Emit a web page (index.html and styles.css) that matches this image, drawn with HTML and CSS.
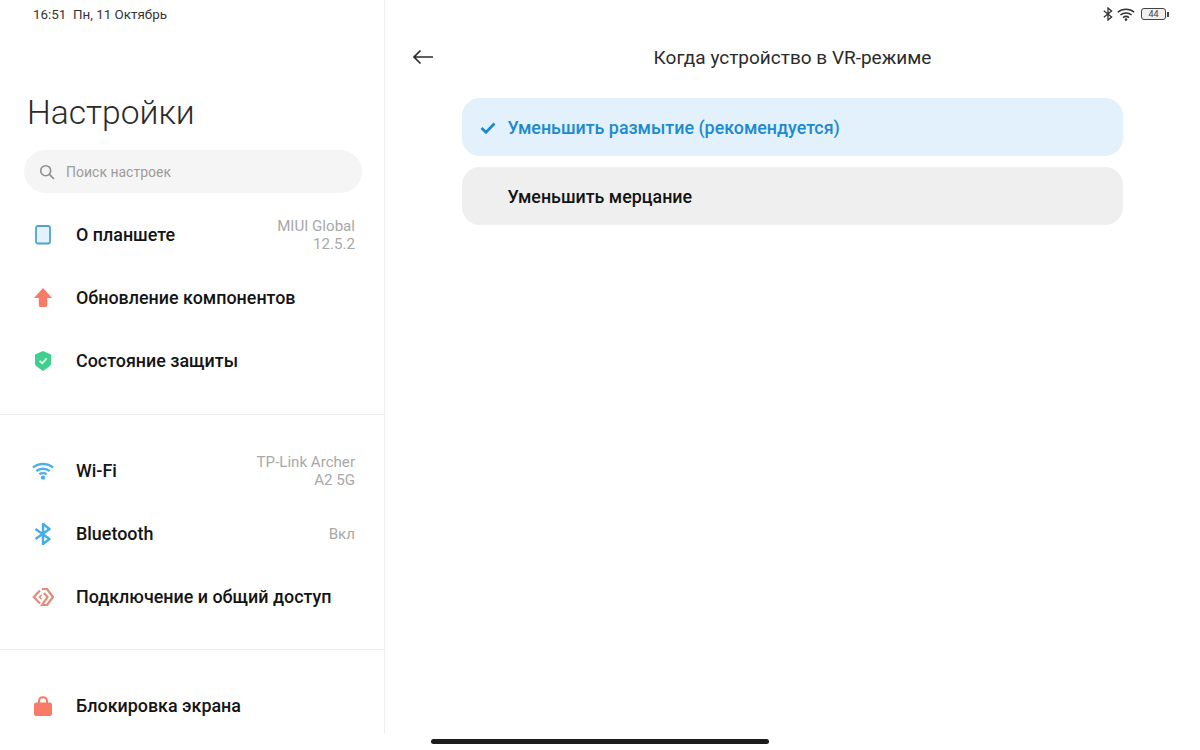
FILE: index.html
```html
<!DOCTYPE html>
<html lang="ru">
<head>
    <meta charset="UTF-8">
    <title>Настройки</title>
    <link rel="stylesheet" href="styles.css">
</head>
<body>
    <div class="app">
        <aside class="sidebar">
            <div class="clock">16:51&nbsp; Пн, 11 Октябрь</div>
            <h1 class="page-title">Настройки</h1>
            <div class="search">
                <svg class="search-icon" viewBox="0 0 16 16" width="16" height="16"><circle cx="6.7" cy="6.7" r="5" fill="none" stroke="#8f8f8f" stroke-width="1.6"/><path d="M10.4 10.4L15 15" stroke="#8f8f8f" stroke-width="1.7" fill="none"/></svg>
                <span>Поиск настроек</span>
            </div>

            <div class="group">
                <div class="row">
                    <div class="row-icon">
                        <svg viewBox="0 0 16 20" width="16" height="20"><rect x="1" y="1" width="14" height="17.5" rx="2" fill="#e3f2fc" stroke="#4fa3d3" stroke-width="1.8"/></svg>
                    </div>
                    <div class="row-label">О планшете</div>
                    <div class="row-value">MIUI Global<br>12.5.2</div>
                </div>
                <div class="row">
                    <div class="row-icon">
                        <svg viewBox="0 0 18 19" width="18" height="19"><path d="M9 0L18 10H13.2V17.6Q13.2 19 11.8 19H6.2Q4.8 19 4.8 17.6V10H0Z" fill="#f77b66"/></svg>
                    </div>
                    <div class="row-label">Обновление компонентов</div>
                </div>
                <div class="row">
                    <div class="row-icon">
                        <svg viewBox="0 0 16 20" width="16" height="20"><path d="M8 0L16 3.5V12.5C16 14 15.4 14.8 14 15.8L8 20L2 15.8C.6 14.8 0 14 0 12.5V3.5Z" fill="#3fd08f"/><path d="M4.6 9.8L7.2 12.3L11.6 7.4" fill="none" stroke="#e8fbf2" stroke-width="1.8"/></svg>
                    </div>
                    <div class="row-label">Состояние защиты</div>
                </div>
            </div>

            <div class="group">
                <div class="row">
                    <div class="row-icon">
                        <svg viewBox="0 0 22 18" width="22" height="18"><g fill="none" stroke="#4fb0e8" stroke-width="2.4"><path d="M1 5.5C6.6 .8 15.4 .8 21 5.5"/><path d="M4.3 9C8 5.9 14 5.9 17.7 9"/><path d="M7.4 12.3C9.4 10.8 12.6 10.8 14.6 12.3"/></g><circle cx="11" cy="15.6" r="2.2" fill="#4fb0e8"/></svg>
                    </div>
                    <div class="row-label">Wi-Fi</div>
                    <div class="row-value">TP-Link Archer<br>A2 5G</div>
                </div>
                <div class="row">
                    <div class="row-icon">
                        <svg viewBox="0 0 18 22" width="18" height="22"><path d="M1.5 6L15.5 16L9 21V1L15.5 6L1.5 16" fill="none" stroke="#45ade6" stroke-width="2.4" stroke-linejoin="round"/></svg>
                    </div>
                    <div class="row-label">Bluetooth</div>
                    <div class="row-value">Вкл</div>
                </div>
                <div class="row">
                    <div class="row-icon">
                        <svg viewBox="0 0 22 18" width="22" height="18"><g fill="none" stroke="#e58a79" stroke-width="2.2"><path d="M8 2.5L1.8 9L8 15.5"/><path d="M10 1H15L21 9L15 17H10L15.5 9L12 5"/><path d="M9.6 6.8L7.4 9L9.6 11.2" stroke-width="1.5"/></g></svg>
                    </div>
                    <div class="row-label">Подключение и общий доступ</div>
                </div>
            </div>

            <div class="group group-last">
                <div class="row">
                    <div class="row-icon">
                        <svg viewBox="0 0 18 20" width="18" height="20"><path d="M5 8V5.5C5 3 6.6 1.2 9 1.2S13 3 13 5.5V8" fill="none" stroke="#f77b66" stroke-width="2"/><rect y="6.5" width="18" height="13.5" rx="2.2" fill="#f77b66"/></svg>
                    </div>
                    <div class="row-label">Блокировка экрана</div>
                </div>
            </div>
        </aside>

        <main class="detail">
            <div class="status-icons">
                <svg viewBox="0 0 10 14" width="10" height="14"><path d="M.8 3.8L8.6 10L5 13V1L8.6 4L.8 10.2" fill="none" stroke="#333" stroke-width="1.3"/></svg>
                <svg viewBox="0 0 18 13" width="18" height="13"><g fill="none" stroke="#333" stroke-width="1.5"><path d="M.8 4.2C5.5 .2 12.5 .2 17.2 4.2"/><path d="M3.4 7C6.6 4.3 11.4 4.3 14.6 7"/><path d="M6 9.6C7.7 8.2 10.3 8.2 12 9.6"/></g><circle cx="9" cy="11.6" r="1.3" fill="#333"/></svg>
                <div class="battery"><div class="battery-body">44</div><div class="battery-tip"></div></div>
            </div>
            <header class="detail-header">
                <svg class="back" viewBox="0 0 22 16" width="22" height="16"><path d="M21 8H2M8.5 1.5L2 8L8.5 14.5" fill="none" stroke="#2b2b2b" stroke-width="1.7"/></svg>
                <h2 class="detail-title">Когда устройство в VR-режиме</h2>
            </header>
            <div class="options">
                <div class="option option-active">
                    <svg class="check" viewBox="0 0 16 12" width="16" height="12"><path d="M1.5 6L6 10.3L14.5 1.5" fill="none" stroke="#1c8ad0" stroke-width="2.7"/></svg>
                    <span>Уменьшить размытие (рекомендуется)</span>
                </div>
                <div class="option">
                    <span>Уменьшить мерцание</span>
                </div>
            </div>
        </main>
    </div>
    <div class="home-area"><div class="home-bar"></div></div>
</body>
</html>
```
FILE: styles.css
```css
* {
    box-sizing: border-box;
}

html, body {
    margin: 0;
    padding: 0;
    height: 750px;
    overflow: hidden;
    background: #fff;
    font-family: Roboto, "Noto Sans", sans-serif;
    color: #111;
}

.app {
    display: flex;
    height: 734px;
}

.sidebar {
    width: 385px;
    flex-shrink: 0;
    border-right: 1px solid #efefef;
    overflow: hidden;
}

.clock {
    height: 30px;
    padding-left: 33px;
    font-size: 13.4px;
    line-height: 30px;
    color: #333;
}

.page-title {
    margin: 60px 0 0 27px;
    height: 46px;
    font-size: 33.6px;
    line-height: 46px;
    font-weight: 300;
    color: #2b2b2b;
}

.search {
    margin: 14px 22px 0 24px;
    height: 43px;
    border-radius: 22px;
    background: #f5f5f5;
    display: flex;
    align-items: center;
    gap: 11px;
    padding-left: 15px;
    font-size: 14px;
    color: #9c9c9c;
}

.group {
    padding: 10px 0 22px;
    border-bottom: 1px solid #ececec;
}

.group + .group {
    padding: 24px 0 21px;
}

.group + .group + .group {
    padding: 24px 0 0;
    border-bottom: none;
}

.row {
    height: 63px;
    display: flex;
    align-items: center;
    padding: 0 29px 0 27px;
}

.row-icon {
    width: 32px;
    margin-right: 17px;
    display: flex;
    justify-content: center;
    align-items: center;
}

.row-label {
    flex: 1;
    font-size: 17.9px;
    font-weight: 500;
    color: #141414;
}

.row-value {
    text-align: right;
    font-size: 15.1px;
    line-height: 18px;
    color: #a8a8a8;
}

.detail {
    flex: 1;
    position: relative;
}

.status-icons {
    position: absolute;
    top: 7px;
    right: 31px;
    display: flex;
    align-items: center;
    gap: 4px;
}

.battery {
    display: flex;
    align-items: center;
    margin-left: 2px;
}

.battery-body {
    width: 25px;
    height: 12px;
    border: 1px solid #444;
    border-radius: 3px;
    font-size: 9px;
    line-height: 10px;
    text-align: center;
    color: #444;
    background: #f0f0f0;
}

.battery-tip {
    width: 2px;
    height: 5px;
    background: #444;
    margin-left: 1px;
}

.detail-header {
    height: 98px;
    display: flex;
    align-items: flex-start;
    padding: 49px 49px 0 27px;
}

.detail-title {
    flex: 1;
    margin: 0;
    text-align: center;
    font-size: 19px;
    line-height: 18px;
    font-weight: 400;
    color: #2b2b2b;
}

.back {
    flex-shrink: 0;
}

.options {
    display: flex;
    flex-direction: column;
    gap: 11px;
    margin: 0 77px;
}

.option {
    height: 58px;
    border-radius: 18px;
    background: #efefef;
    display: flex;
    align-items: center;
    padding: 1px 0 0 45.5px;
    font-size: 17.85px;
    font-weight: 500;
    color: #141414;
}

.option-active {
    background: #e3f1fc;
    color: #1c8ad0;
    padding-left: 17.5px;
}

.check {
    margin-right: 12px;
}

.home-area {
    height: 16px;
    display: flex;
    justify-content: center;
    padding-top: 5px;
}

.home-bar {
    width: 338px;
    height: 5px;
    border-radius: 3px;
    background: #1c1c1c;
}
```
